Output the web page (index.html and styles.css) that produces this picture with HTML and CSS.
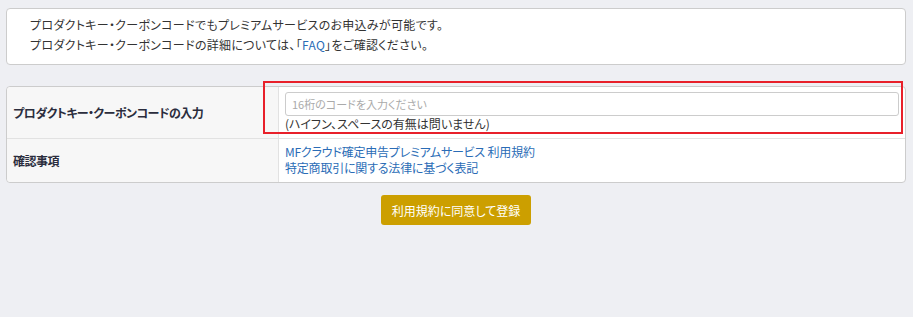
FILE: index.html
```html
<!DOCTYPE html>
<html lang="ja">
<head>
    <meta charset="UTF-8">
    <meta name="viewport" content="width=device-width, initial-scale=1.0">
    <title>プロダクトキー・クーポンコード</title>
    <link rel="stylesheet" href="styles.css">
</head>
<body>
<div class="notice">
    <p>プロダクトキー・クーポンコードでもプレミアムサービスのお申込みが可能です。</p>
    <p>プロダクトキー・クーポンコードの詳細については、「<a href="#">FAQ</a>」をご確認ください。</p>
</div>

<div class="form-wrap">
    <table class="form-table">
        <tr class="row-code">
            <th>プロダクトキー・クーポンコードの入力</th>
            <td>
                <input type="text" class="code-input" placeholder="16桁のコードを入力ください">
                <p class="hint">(ハイフン、スペースの有無は問いません)</p>
            </td>
        </tr>
        <tr class="row-terms">
            <th>確認事項</th>
            <td class="links">
                <a href="#">MFクラウド確定申告プレミアムサービス 利用規約</a><br>
                <a href="#">特定商取引に関する法律に基づく表記</a>
            </td>
        </tr>
    </table>
    <!-- 注目枠 -->
    <div class="highlight"></div>
</div>

<div class="actions">
    <button class="submit">利用規約に同意して登録</button>
</div>
</body>
</html>
```

FILE: styles.css
```css
body {
    font-family: "Noto Sans CJK JP", "Liberation Sans", sans-serif;
    font-size: 12px;
    font-feature-settings: "palt";
    color: #333;
    background-color: #eeeff3;
    margin: 0;
    padding: 8px 7px 0 6px;
}
a {
    color: #2a6cb6;
    text-decoration: none;
}
.notice {
    background-color: #fff;
    border: 1px solid #ccc;
    border-radius: 4px;
    padding: 6px 23px 9px;
    letter-spacing: 0.3px;
}
.notice p {
    margin: 0;
    line-height: 20px;
}
.form-wrap {
    position: relative;
    margin-top: 21px;
}
.form-table {
    width: 100%;
    border-collapse: separate;
    border-spacing: 0;
    background-color: #fff;
    border: 1px solid #ccc;
    border-radius: 4px;
}
.form-table th {
    width: 259px;
    text-align: left;
    font-weight: bold;
    color: #2b2d3d;
    background-color: #f7f7f7;
    border-right: 1px solid #e2e2e2;
    padding: 0 6px;
    letter-spacing: -0.5px;
}
.form-table td {
    padding: 5px 6px 6px;
    line-height: 16px;
}
.links {
    letter-spacing: -0.2px;
}
.row-code th,
.row-code td {
    border-bottom: 1px solid #e2e2e2;
}
.row-code th {
    border-top-left-radius: 4px;
}
.row-terms th {
    border-bottom-left-radius: 4px;
}
.code-input {
    display: block;
    box-sizing: border-box;
    width: 100%;
    height: 24px;
    padding: 0 6px;
    border: 1px solid #ccc;
    border-radius: 3px;
    font-family: inherit;
    font-size: 11px;
    font-feature-settings: "palt";
    color: #333;
}
.code-input::placeholder {
    color: #aaa;
}
.hint {
    margin: 0;
    line-height: 16px;
}
.highlight {
    position: absolute;
    left: 257px;
    top: -5px;
    width: 636px;
    height: 49px;
    border: 2px solid #e8202a;
    pointer-events: none;
}
.actions {
    text-align: center;
    margin-top: 12px;
}
.submit {
    width: 150px;
    height: 30px;
    border: none;
    border-radius: 3px;
    background-color: #cc9f00;
    color: #fff;
    font-family: inherit;
    font-size: 12px;
    font-feature-settings: "palt";
    cursor: pointer;
}
.submit:hover {
    background-color: #b58d00;
}
```
